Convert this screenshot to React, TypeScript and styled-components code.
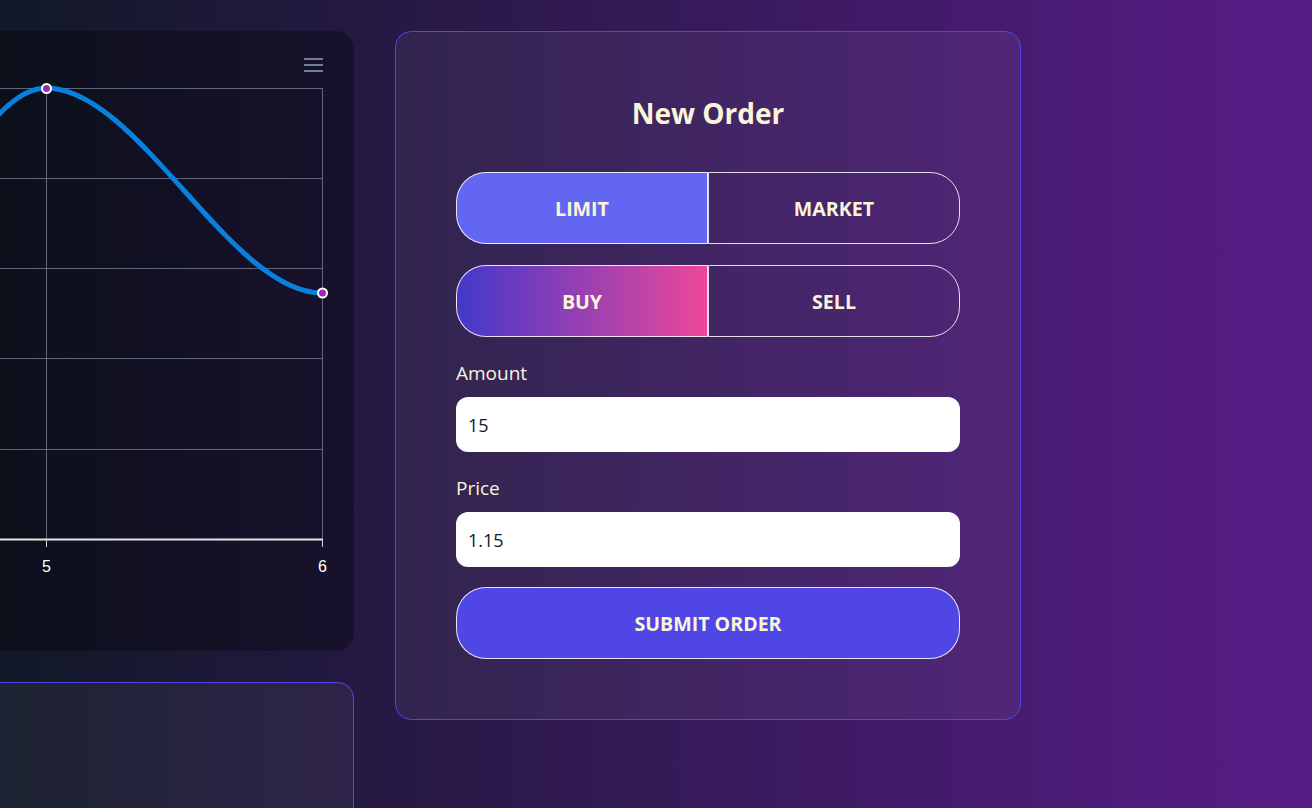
import React, { useState } from "react";
import styled, { createGlobalStyle, css } from "styled-components";

const GlobalStyle = createGlobalStyle`
  html, body {
    margin: 0;
    padding: 0;
    width: 100%;
    height: 100%;
    overflow: hidden;
  }
  body {
    background: linear-gradient(to right, #111827, #581c87);
    font-family: "Open Sans", "Noto Sans", sans-serif;
  }
  * { box-sizing: border-box; }
`;

const CREAM = "#faf5da";
const LEFT_WIDTH = 680;

const Viewport = styled.div`
  width: 1312px;
  height: 808px;
  overflow: hidden;
`;

const Page = styled.div`
  display: flex;
  align-items: flex-start;
  gap: 41px;
  padding-top: 31px;
  margin-left: ${354 - LEFT_WIDTH}px;
`;

const LeftColumn = styled.div`
  width: ${LEFT_WIDTH}px;
  flex-shrink: 0;
  display: flex;
  flex-direction: column;
  gap: 31px;
`;

const ChartCard = styled.div`
  height: 620px;
  border-radius: 18px;
  background: rgba(0, 0, 0, 0.3);
  overflow: hidden;
`;

const ChartSvg = styled.svg`
  display: block;
  width: 100%;
  height: 100%;
`;

const InfoCard = styled.div`
  height: 200px;
  border-radius: 16px;
  border: 1px solid #4f46e5;
  background: rgba(255, 255, 255, 0.05);
`;

const OrderCard = styled.div`
  width: 626px;
  flex-shrink: 0;
  border: 1px solid #4f46e5;
  border-radius: 16px;
  background: rgba(255, 255, 255, 0.05);
  padding: 60px;
  display: flex;
  flex-direction: column;
`;

const Title = styled.h2`
  margin: 0 0 38px;
  text-align: center;
  font-size: 28px;
  line-height: 42px;
  font-weight: 700;
  color: ${CREAM};
`;

const Segmented = styled.div<{ $mt?: number }>`
  display: grid;
  grid-template-columns: 1fr 1fr;
  margin-top: ${(p) => p.$mt ?? 0}px;
`;

const SegButton = styled.button<{ $side: "left" | "right"; $active: boolean; $variant: "plain" | "gradient" }>`
  height: 72px;
  border: 1px solid rgba(255, 255, 255, 0.85);
  font-family: inherit;
  font-size: 19.6px;
  font-weight: 700;
  color: ${CREAM};
  cursor: pointer;
  background: transparent;
  border-radius: ${(p) => (p.$side === "left" ? "30px 0 0 30px" : "0 30px 30px 0")};
  ${(p) =>
    p.$active &&
    (p.$variant === "gradient"
      ? css`background: linear-gradient(to right, #4338ca, #ec4899);`
      : css`background: #6366f1;`)}
`;

const Field = styled.label`
  display: flex;
  flex-direction: column;
  gap: 12px;
  margin-top: 24px;
`;

const FieldLabel = styled.span`
  font-size: 19px;
  line-height: 24px;
  color: ${CREAM};
`;

const Input = styled.input`
  height: 55px;
  border: none;
  outline: none;
  border-radius: 12px;
  background: #ffffff;
  padding: 0 12px;
  font-family: inherit;
  font-size: 18px;
  color: #111827;
`;

const SubmitButton = styled.button`
  margin-top: 20px;
  height: 72px;
  border-radius: 30px;
  border: 1px solid rgba(255, 255, 255, 0.85);
  background: #4f46e5;
  color: ${CREAM};
  font-family: inherit;
  font-size: 19.6px;
  font-weight: 700;
  cursor: pointer;
`;

const AxisLabel = styled.text`
  font-family: "Liberation Sans", Arial, sans-serif;
  font-size: 16px;
  fill: #ffffff;
`;

function Chart() {
  const gridY = [57, 147, 237, 327, 418];
  const gridX = [96, 372, 648];
  return (
    <ChartSvg viewBox={`0 0 ${LEFT_WIDTH} 620`} preserveAspectRatio="none">
      <g fill="#6e8192">
        <rect x={630} y={27} width={19} height={2} />
        <rect x={630} y={33} width={19} height={2} />
        <rect x={630} y={39} width={19} height={2} />
      </g>
      <g stroke="#60667a" strokeWidth={1}>
        {gridY.map((y) => (
          <line key={y} x1={0} y1={y + 0.5} x2={648.5} y2={y + 0.5} />
        ))}
        {gridX.map((x) => (
          <line key={x} x1={x + 0.5} y1={57} x2={x + 0.5} y2={508} />
        ))}
      </g>
      <line x1={0} y1={508.5} x2={649} y2={508.5} stroke="#e6e6e6" strokeWidth={2} />
      {gridX.map((x) => (
        <line key={`t${x}`} x1={x + 0.5} y1={508} x2={x + 0.5} y2={516} stroke="#d0d0d0" strokeWidth={1} />
      ))}
      <AxisLabel x={372.5} y={541} textAnchor="middle">5</AxisLabel>
      <AxisLabel x={648.5} y={541} textAnchor="middle">6</AxisLabel>
      <path
        d="M 96 395 C 188 395 280 57 372 57 C 464 57 556 262 648 262"
        fill="none"
        stroke="#0781dd"
        strokeWidth={5}
        strokeLinecap="round"
      />
      <circle cx={372.5} cy={57.5} r={4.5} fill="#9c27b0" stroke="#ffffff" strokeWidth={2} />
      <circle cx={648.5} cy={262} r={4.5} fill="#9c27b0" stroke="#ffffff" strokeWidth={2} />
    </ChartSvg>
  );
}

export default function App() {
  const [orderType, setOrderType] = useState<"limit" | "market">("limit");
  const [side, setSide] = useState<"buy" | "sell">("buy");
  const [amount, setAmount] = useState("15");
  const [price, setPrice] = useState("1.15");

  return (
    <>
      <GlobalStyle />
      <Viewport>
        <Page>
          <LeftColumn>
            <ChartCard>
              <Chart />
            </ChartCard>
            <InfoCard />
          </LeftColumn>
          <OrderCard>
            <Title>New Order</Title>
            <Segmented>
              <SegButton $side="left" $variant="plain" $active={orderType === "limit"} onClick={() => setOrderType("limit")}>
                LIMIT
              </SegButton>
              <SegButton $side="right" $variant="plain" $active={orderType === "market"} onClick={() => setOrderType("market")}>
                MARKET
              </SegButton>
            </Segmented>
            <Segmented $mt={21}>
              <SegButton $side="left" $variant="gradient" $active={side === "buy"} onClick={() => setSide("buy")}>
                BUY
              </SegButton>
              <SegButton $side="right" $variant="gradient" $active={side === "sell"} onClick={() => setSide("sell")}>
                SELL
              </SegButton>
            </Segmented>
            <Field>
              <FieldLabel>Amount</FieldLabel>
              <Input value={amount} onChange={(e) => setAmount(e.target.value)} />
            </Field>
            <Field>
              <FieldLabel>Price</FieldLabel>
              <Input value={price} onChange={(e) => setPrice(e.target.value)} />
            </Field>
            <SubmitButton>SUBMIT ORDER</SubmitButton>
          </OrderCard>
        </Page>
      </Viewport>
    </>
  );
}
